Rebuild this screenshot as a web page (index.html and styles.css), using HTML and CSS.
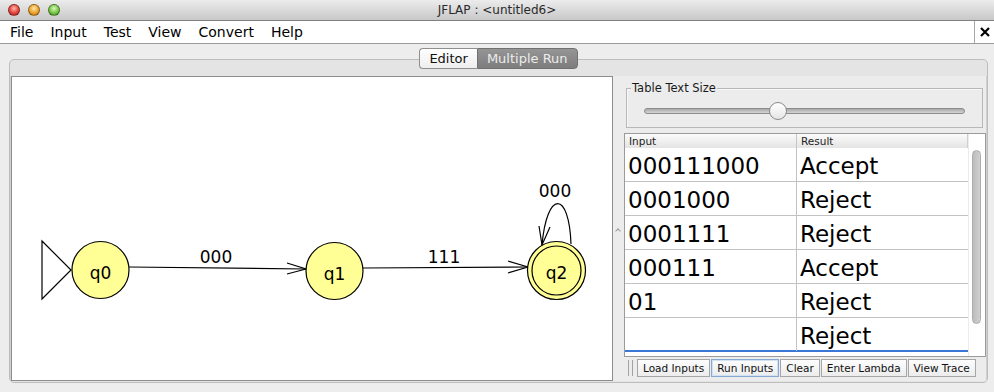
FILE: index.html
```html
<!DOCTYPE html>
<html lang="en">
<head>
  <meta charset="UTF-8">
  <title>JFLAP : &lt;untitled6&gt;</title>
  <link rel="stylesheet" href="styles.css">
</head>
<body>

  <!-- Window title bar -->
  <div class="titlebar">
    <div class="lights">
      <span class="light red"></span>
      <span class="light yellow"></span>
      <span class="light green"></span>
    </div>
    <div class="title">JFLAP : &lt;untitled6&gt;</div>
    <div></div>
  </div>

  <div class="menubar">
    <span>File</span>
    <span>Input</span>
    <span>Test</span>
    <span>View</span>
    <span>Convert</span>
    <span>Help</span>
    <span class="close">
      <svg width="10" height="10" viewBox="0 0 10 10"><path d="M1 1L9 9M9 1L1 9" stroke="#000" stroke-width="2.2"/></svg>
    </span>
  </div>

  <div class="main">
    <div class="tabs">
      <span class="tab">Editor</span>
      <span class="tab active">Multiple Run</span>
    </div>

    <div class="pane">
      <div class="content">

        <!-- Automaton editor canvas -->
        <div class="canvas">
          <svg width="600" height="302" viewBox="12 77 600 302" class="diagram">
            <polygon points="42,241 71,270 42,299" fill="#fff" stroke="#000" stroke-width="1.2"/>

            <line x1="129" y1="267" x2="306" y2="269" stroke="#000" stroke-width="1.2"/>
            <path d="M287 263L306 269L287 274" fill="none" stroke="#000" stroke-width="1.2"/>
            <text x="216" y="263" text-anchor="middle">000</text>

            <line x1="363" y1="268" x2="528" y2="267" stroke="#000" stroke-width="1.2"/>
            <path d="M508 261L528 267L508 273" fill="none" stroke="#000" stroke-width="1.2"/>
            <text x="444" y="263" text-anchor="middle">111</text>

            <path d="M571 244C569 190 547 190 542 245" fill="none" stroke="#000" stroke-width="1.2"/>
            <path d="M539 226L542 245L550 227" fill="none" stroke="#000" stroke-width="1.2"/>
            <text x="555" y="197" text-anchor="middle">000</text>

            <circle cx="100.5" cy="270" r="28.5" class="state"/>
            <text x="100.5" y="279" text-anchor="middle">q0</text>

            <circle cx="334.5" cy="271" r="28.5" class="state"/>
            <text x="334.5" y="280" text-anchor="middle">q1</text>

            <circle cx="556.5" cy="270.5" r="29" class="state"/>
            <circle cx="556.5" cy="270.5" r="24.5" fill="none" stroke="#000" stroke-width="1.2"/>
            <text x="556.5" y="279" text-anchor="middle">q2</text>
          </svg>
        </div>

        <div class="divider"><span class="divider-mark"></span></div>

        <div class="side">
          <div class="group">
            <div class="group-title">Table Text Size</div>
            <div class="slider"><span class="knob"></span></div>
          </div>

          <div class="table">
            <div class="table-body">
              <div class="thead">
                <div class="th">Input</div>
                <div class="th">Result</div>
              </div>
              <div class="row"><div class="cell">000111000</div><div class="cell">Accept</div></div>
              <div class="row"><div class="cell">0001000</div><div class="cell">Reject</div></div>
              <div class="row"><div class="cell">0001111</div><div class="cell">Reject</div></div>
              <div class="row"><div class="cell">000111</div><div class="cell">Accept</div></div>
              <div class="row"><div class="cell">01</div><div class="cell">Reject</div></div>
              <div class="row"><div class="cell"></div><div class="cell">Reject</div></div>
            </div>
            <div class="scrollbar"><div class="thumb"></div></div>
          </div>

          <div class="toolbar">
            <span class="grip"></span>
            <span class="btn">Load Inputs</span>
            <span class="btn focus">Run Inputs</span>
            <span class="btn">Clear</span>
            <span class="btn">Enter Lambda</span>
            <span class="btn">View Trace</span>
          </div>
        </div>

      </div>
    </div>
  </div>

</body>
</html>
```

FILE: styles.css
```css
* { box-sizing: border-box; }
body { margin: 0; width: 994px; height: 392px; overflow: hidden; background: #ededed; font-family: "DejaVu Sans", Verdana, sans-serif; color: #000; }

/* title bar */
.titlebar { display: grid; grid-template-columns: 1fr auto 1fr; align-items: center; height: 21px; background: linear-gradient(#ececec, #c8c8c8); border-bottom: 1px solid #808080; }
.lights { display: flex; gap: 8px; padding-left: 8px; }
.light { width: 12px; height: 12px; border-radius: 50%; border: 1px solid rgba(0, 0, 0, .35); }
.red { background: radial-gradient(circle at 50% 35%, #ffb8b0, #e2463d 55%, #b0231c); }
.yellow { background: radial-gradient(circle at 50% 35%, #ffe6a8, #eaa12c 55%, #b5710f); }
.green { background: radial-gradient(circle at 50% 35%, #d9f7b8, #78c646 55%, #3c8a1c); }
.title { font-size: 12px; color: #2a2a2a; }

/* menu bar */
.menubar { display: flex; align-items: center; gap: 17px; height: 23px; padding-left: 10px; background: #fff; border-bottom: 1px solid #9c9c9c; font-size: 14px; }
.close { margin-left: auto; align-self: stretch; width: 20px; border-left: 1px solid #a8a8a8; display: flex; align-items: center; justify-content: center; }

/* tabbed pane */
.main { padding: 4px 6px 0 9px; }
.tabs { display: flex; justify-content: center; position: relative; z-index: 1; height: 21px; }
.tab { font-size: 13px; line-height: 19px; padding: 0 9px; border: 1px solid #8f8f8f; background: linear-gradient(#ffffff, #eeeeee); color: #111; }
.tab:first-child { border-radius: 4px 0 0 4px; border-right: none; }
.tab.active { background: linear-gradient(#959595, #7d7d7d); color: #ececec; border-color: #717171; border-radius: 0 4px 4px 0; }

.pane { margin-top: -10px; height: 324px; display: flex; padding: 16px 0 1px; border: 1px solid #bdbdbd; border-radius: 5px; background: #e4e4e4; }
.content { flex: 1; display: flex; background: #ececec; border-left: 1px solid #d0d0d0; border-right: 1px solid #d0d0d0; }

.canvas { width: 602px; background: #fff; border: 1px solid #8d8d8d; }
.diagram { display: block; }
.diagram text { font-family: "DejaVu Sans", sans-serif; font-size: 17px; fill: #000; }
.state { fill: #ffff96; stroke: #000; stroke-width: 1.2; }

.divider { width: 10px; display: flex; align-items: center; justify-content: center; }
.divider-mark { width: 4px; height: 4px; margin-top: 4px; border-top: 1px solid #9a9a9a; border-left: 1px solid #9a9a9a; transform: rotate(45deg); }

/* right side: run table */
.side { flex: 1; display: flex; flex-direction: column; }

.group { margin: 12px 3px 0; border: 1px solid #b8b8b8; box-shadow: inset 1px 1px 0 #f7f7f7; }
.group-title { width: fit-content; margin: -8px 0 0 4px; padding: 0 1px; background: #ececec; font-size: 11.5px; line-height: 14px; color: #1a1a1a; }
.slider { position: relative; height: 6px; margin: 13px 17px; border: 1px solid #8c8c8c; border-radius: 3px; background: linear-gradient(#a8a8a8, #d4d4d4); }
.knob { position: absolute; left: 124px; top: -7px; width: 18px; height: 18px; border-radius: 50%; border: 1px solid #8a8a8a; background: linear-gradient(#ffffff, #e6e6e6); }

.table { display: flex; height: 224px; margin: 5px 0 0 1px; border: 1px solid #9b9b9b; background: #fff; }
.table-body { flex: 1; }
.thead, .row { display: grid; grid-template-columns: 172px 1fr; }
.thead { height: 14px; background: linear-gradient(#fbfbfb, #e4e4e4); border-right: 1px solid #cfcfcf; font-size: 10.5px; }
.th { padding-left: 4px; line-height: 14px; color: #222; }
.th:first-child { border-right: 1px solid #c6c6c6; }
.row { height: 34px; border-bottom: 1px solid #c2c2c2; font-size: 23px; }
.row:last-child { border-bottom: 2px solid #3a77d6; }
.cell { padding: 4px 0 0 3px; line-height: 29px; }
.cell:first-child { border-right: 1px solid #c2c2c2; }

.scrollbar { width: 17px; padding: 16px 0 0 3px; border-left: 1px solid #ececec; }
.thumb { width: 9px; height: 174px; border-radius: 5px; border: 1px solid #acacac; background: linear-gradient(90deg, #bcbcbc, #d0d0d0); }

.toolbar { display: flex; gap: 1px; height: 18px; margin: 2px 0 0 5px; }
.grip { width: 5px; margin: 1px 3px 1px 0; border-left: 1px solid #a2a2a2; border-right: 1px solid #a2a2a2; }
.btn { font-size: 10.5px; line-height: 16px; padding: 0 5px; border: 1px solid #a6a6a6; background: linear-gradient(#fdfdfd, #ececec); color: #111; }
.btn.focus { border-color: #86a9d3; box-shadow: inset 0 0 0 1px #d3e2f3; }
```
